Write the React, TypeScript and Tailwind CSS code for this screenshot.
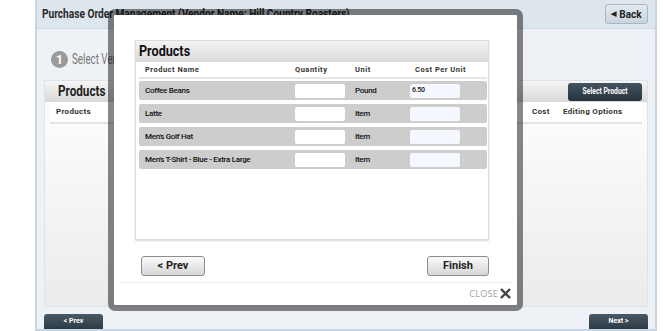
import React from "react"

const rows = [
  { name: "Coffee Beans", unit: "Pound", cost: "6.50" },
  { name: "Latte", unit: "Item", cost: "" },
  { name: "Men's Golf Hat", unit: "Item", cost: "" },
  { name: "Men's T-Shirt - Blue - Extra Large", unit: "Item", cost: "" },
]

const roboto = { fontFamily: 'Roboto, "Liberation Sans", sans-serif' }

function ProductsModal() {
  return (
    <div className="absolute left-[108px] top-[9px] w-[415px] h-[302px] rounded-[7px] border-[6px] border-[rgba(0,0,0,0.47)] bg-white bg-clip-padding flex flex-col">
      <div className="ml-[21px] mt-[25px] w-[354px] h-[200px] border border-[#dcdcdc] shadow-[0_1px_2px_rgba(0,0,0,0.15)] flex flex-col bg-white">
        <div className="h-[21px] bg-gradient-to-b from-[#f4f4f4] to-[#d9d9d9] flex items-center px-[3px]">
          <span className="inline-block origin-left scale-x-[0.9] text-[14px] font-bold text-[#111]" style={roboto}>Products</span>
        </div>
        <div className="h-[17px] ml-[3px] mr-[1px] border-b-2 border-[#e6e6e6] flex items-center text-[7.5px] font-bold tracking-[0.5px] text-[#333]" style={roboto}>
          <span className="w-[156px] pl-[6px]">Product Name</span>
          <span className="w-[60px]">Quantity</span>
          <span className="w-[60px]">Unit</span>
          <span>Cost Per Unit</span>
        </div>
        <div className="flex flex-col gap-[4px] mt-[2px] ml-[3px] mr-[1px]">
          {rows.map((r) => (
            <div key={r.name} className="h-[19px] rounded-[2px] bg-[#cdcdcd] flex items-center text-[8px] font-medium text-[#111] tracking-[-0.3px]" style={roboto}>
              <span className="w-[156px] pl-[6px]">{r.name}</span>
              <span className="w-[50px] h-[14px] bg-white rounded-[2px]" />
              <span className="w-[65px] pl-[10px]">{r.unit}</span>
              <span className="w-[50px] h-[14px] bg-[#f5f8fe] rounded-[2px] text-[7px] pl-[2px] flex items-center">{r.cost}</span>
            </div>
          ))}
        </div>
      </div>
      <div className="flex justify-between ml-[27px] mr-[28px] mt-[16px]">
        <button className="w-[64px] h-[20px] rounded-[3px] border border-[#8e8e8e] bg-gradient-to-b from-[#fbfbfb] to-[#d6d6d6] text-[11px] font-bold text-[#222]" style={roboto}>&lt; Prev</button>
        <button className="w-[62px] h-[20px] rounded-[3px] border border-[#8e8e8e] bg-gradient-to-b from-[#fbfbfb] to-[#d6d6d6] text-[11px] font-bold text-[#222]" style={roboto}>Finish</button>
      </div>
      <div className="mx-[6px] mt-[6px] border-t border-[#ececec]" />
      <div className="flex justify-end items-center gap-[2px] mr-[6px] mt-[4px]">
        <span className="text-[9px] text-[#a0a0a0] tracking-[0.3px]" style={{ fontFamily: '"Open Sans", sans-serif' }}>CLOSE</span>
        <svg width="11" height="11" viewBox="0 0 12 12">
          <path d="M2 2 L10 10 M10 2 L2 10" stroke="#444" strokeWidth="2.6" strokeLinecap="square" />
        </svg>
      </div>
    </div>
  )
}

export default function App() {
  return (
    <div className="relative w-[670px] h-[331px] bg-white overflow-hidden flex">
      <div className="w-[35px] shrink-0" />
      <div className="w-[622px] h-full border-x-2 border-b-2 border-[#c8d6e3] bg-[#eef2f7] flex flex-col">
        <div className="h-[29px] shrink-0 bg-[#dde5ed] border-b border-[#cfd9e3] flex items-center justify-between pl-[5px] pr-[7px]">
          <span className="inline-block origin-left scale-x-[0.78] whitespace-nowrap text-[13px] font-bold text-[#2a2a2a]" style={roboto}>
            Purchase Order Management (Vendor Name: Hill Country Roasters)
          </span>
          <button className="w-[43px] h-[20px] rounded-[3px] border border-[#a9b6c2] bg-gradient-to-b from-[#e3eaf1] to-[#c9d4de] text-[10px] font-bold text-[#222] flex items-center justify-center gap-[3px]" style={roboto}>
            <span className="text-[7px]">◀</span>Back
          </button>
        </div>
        <div className="flex items-center mt-[20px] ml-[14px] gap-[4px]">
          <div className="w-[17px] h-[17px] rounded-full bg-[#9a9a9a] text-white text-[12px] font-bold flex items-center justify-center" style={roboto}>1</div>
          <span className="inline-block origin-left scale-x-[0.7] whitespace-nowrap text-[14px] text-[#777]" style={roboto}>Select Vendor</span>
        </div>
        <div className="mt-[10px] ml-[7px] mr-[7px] h-[228px] border border-[#dde3e9] flex flex-col bg-gradient-to-b from-white to-[#ebebeb]">
          <div className="h-[21px] shrink-0 bg-gradient-to-b from-[#f6f6f6] to-[#d8d8d8] flex items-center justify-between pl-[13px] pr-[5px]">
            <span className="inline-block origin-left scale-x-[0.78] text-[15px] font-bold text-[#222]" style={roboto}>Products</span>
            <button className="w-[74px] h-[18px] rounded-[3px] bg-gradient-to-b from-[#435460] to-[#27343e] text-white text-[8.5px] font-bold" style={roboto}>
              <span className="inline-block scale-x-[0.8]">Select Product</span>
            </button>
          </div>
          <div className="h-[22px] shrink-0 mx-[5px] border-b-2 border-[#e4e4e4] bg-white flex items-center text-[8px] font-bold text-[#333] tracking-[0.3px]" style={roboto}>
            <span className="w-[482px] pl-[6px]">Products</span>
            <span className="w-[31px]">Cost</span>
            <span>Editing Options</span>
          </div>
        </div>
        <div className="flex justify-between mt-[7px] ml-[7px] mr-[7px]">
          <button className="w-[59px] h-[15px] rounded-t-[3px] bg-gradient-to-b from-[#4a5a66] to-[#2c3a44] text-white text-[7px] font-bold" style={roboto}>&lt; Prev</button>
          <button className="w-[59px] h-[15px] rounded-t-[3px] bg-gradient-to-b from-[#4a5a66] to-[#2c3a44] text-white text-[7px] font-bold" style={roboto}>Next &gt;</button>
        </div>
      </div>
      <ProductsModal />
    </div>
  )
}
